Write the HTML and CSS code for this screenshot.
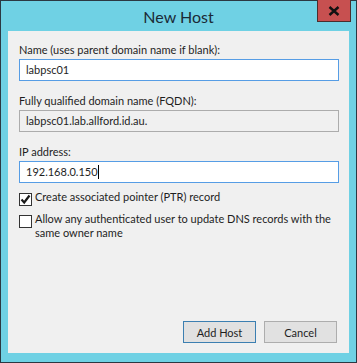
FILE: index.html
```html
<!DOCTYPE html>
<html lang="en">
<head>
  <meta charset="UTF-8">
  <meta name="viewport" content="width=device-width, initial-scale=1.0">
  <title>New Host</title>
  <link rel="stylesheet" href="styles.css">
</head>
<body>
  <div class="window">
    <div class="titlebar">New Host</div>
    <div class="close-button">
      <svg width="12" height="10" viewBox="0 0 12 10">
        <path d="M1.5 1 L10.5 9 M10.5 1 L1.5 9" stroke="#111" stroke-width="2.4" fill="none"/>
      </svg>
    </div>

    <div class="dialog">
      <div class="label">Name (uses parent domain name if blank):</div>
      <div class="field">labpsc01</div>

      <div class="label">Fully qualified domain name (FQDN):</div>
      <div class="field readonly">labpsc01.lab.allford.id.au.</div>

      <div class="label">IP address:</div>
      <div class="field">192.168.0.150<span class="caret"></span></div>

      <div class="check-row first">
        <span class="checkbox">
          <svg width="11" height="11" viewBox="0 0 11 11">
            <path d="M1.5 5.5 L4.2 8.5 L9.5 1.5" stroke="#1a1a1a" stroke-width="2.2" fill="none"/>
          </svg>
        </span>
        <span>Create associated pointer (PTR) record</span>
      </div>
      <div class="check-row">
        <span class="checkbox"></span>
        <span>Allow any authenticated user to update DNS records with the same owner name</span>
      </div>

      <div class="buttons">
        <button class="default-button">Add Host</button>
        <button>Cancel</button>
      </div>
    </div>
  </div>
</body>
</html>
```

FILE: styles.css
```css
body {
  margin: 0;
  font-family: Lato, "Noto Sans", sans-serif;
  font-size: 11px;
  color: #1e1e1e;
}
.window {
  position: relative;
  width: 357px;
  height: 363px;
  box-sizing: border-box;
  border: 1px solid #2b3842;
  background: #6fd1e4;
  display: flex;
  flex-direction: column;
}
.titlebar {
  height: 30px;
  display: flex;
  align-items: center;
  justify-content: center;
  font-size: 16px;
  color: #1b2a36;
}
.close-button {
  position: absolute;
  top: -1px;
  right: 5px;
  width: 34px;
  height: 22px;
  box-sizing: border-box;
  background: #c75050;
  border: 1px solid #4a2e2e;
  border-top: none;
  display: flex;
  align-items: center;
  justify-content: center;
}
.dialog {
  flex: 1;
  margin: 0 7px 9px;
  background: #f0f0f0;
  padding: 11px 10px 10px 11px;
  display: flex;
  flex-direction: column;
}
.label {
  line-height: 15px;
  margin-bottom: 2px;
}
.field {
  height: 22px;
  box-sizing: border-box;
  border: 1px solid #569de5;
  background: #fff;
  padding: 0 6px;
  line-height: 20px;
  margin-bottom: 12px;
}
.field.readonly {
  border-color: #acacac;
  background: #f0f0f0;
}
.caret {
  display: inline-block;
  width: 1px;
  height: 14px;
  background: #000;
  vertical-align: -3px;
}
.check-row {
  display: flex;
  align-items: flex-start;
  line-height: 14px;
  margin-top: 6px;
}
.check-row.first {
  margin-top: -5px;
}
.checkbox {
  flex: none;
  width: 13px;
  height: 13px;
  box-sizing: border-box;
  border: 1px solid #333;
  background: #fff;
  margin: 3px 3px 0 0;
  display: flex;
  align-items: center;
  justify-content: center;
}
.buttons {
  margin-top: auto;
  display: flex;
  justify-content: flex-end;
  gap: 8px;
  padding-right: 2px;
}
button {
  width: 73px;
  height: 22px;
  font-family: inherit;
  font-size: 11px;
  color: #1e1e1e;
  background: #e1e1e1;
  border: 1px solid #adadad;
  padding: 0;
}
.default-button {
  border-color: #3c7fb1;
}
```
